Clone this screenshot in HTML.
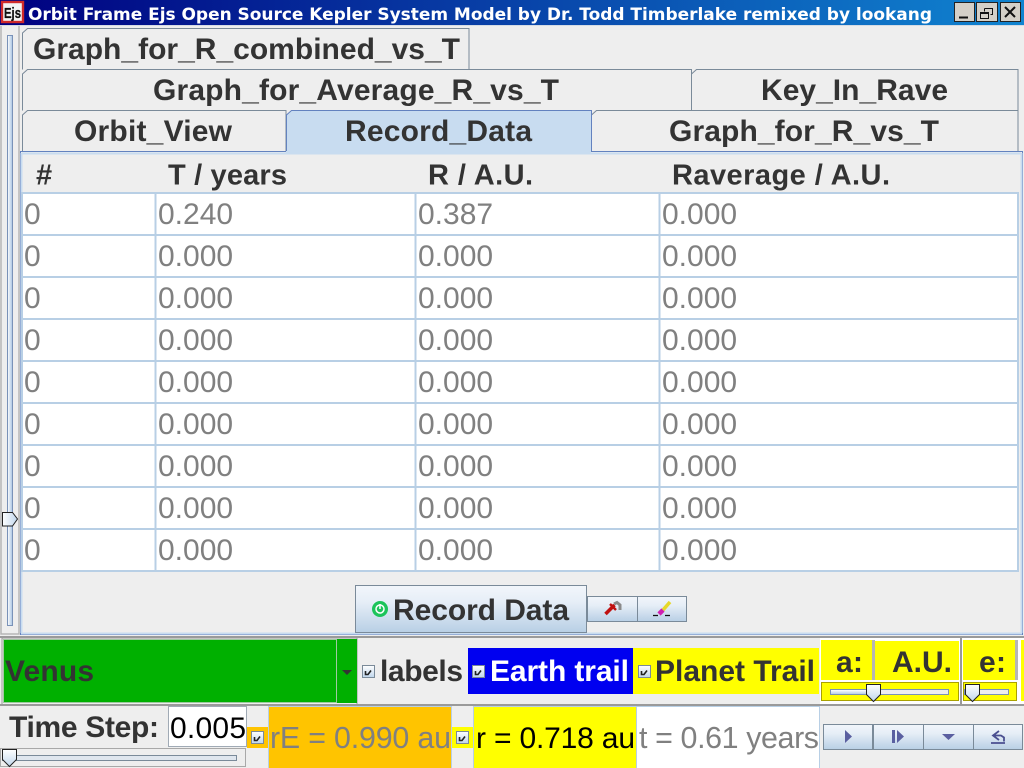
<!DOCTYPE html>
<html><head><meta charset="utf-8"><title>Orbit Frame Ejs Open Source Kepler System Model</title>
<style>
html,body{margin:0;padding:0;width:1024px;height:768px;overflow:hidden;background:#eee}
svg{display:block}
text{font-family:"Liberation Sans",Arial,sans-serif;font-size:30px;white-space:pre}
.b{font-weight:bold;fill:#333}
.h{font-size:29px}
.v{fill:#808080;font-size:30.4px}
.cell{stroke:#b8cfe5;stroke-width:2;fill:none}
</style></head><body>
<svg width="1024" height="768" viewBox="0 0 1024 768" xmlns="http://www.w3.org/2000/svg">
<defs>
<linearGradient id="tb" x1="0" x2="1" y1="0" y2="0"><stop offset="0" stop-color="#000080"/><stop offset="1" stop-color="#1084d0"/></linearGradient>
<linearGradient id="bt" x1="0" x2="0" y1="0" y2="1"><stop offset="0" stop-color="#f2f6fb"/><stop offset=".35" stop-color="#e6eef7"/><stop offset="1" stop-color="#b8cfe5"/></linearGradient>
<linearGradient id="tk" x1="0" x2="0" y1="0" y2="1"><stop offset="0" stop-color="#fff"/><stop offset="1" stop-color="#b8cfe5"/></linearGradient>
<linearGradient id="vt" x1="0" x2="1" y1="0" y2="0"><stop offset="0" stop-color="#fff"/><stop offset="1" stop-color="#a9c4e2"/></linearGradient>
<linearGradient id="th" x1="0" x2="1" y1="0" y2="0"><stop offset="0" stop-color="#fff"/><stop offset="1" stop-color="#c0d6ec"/></linearGradient>
<linearGradient id="thd" x1="0" x2="0" y1="0" y2="1"><stop offset="0" stop-color="#fff"/><stop offset="1" stop-color="#c0d6ec"/></linearGradient>
<g id="cb"><rect x=".5" y=".5" width="12" height="12" fill="url(#thd)" stroke="#7a8a99"/><path d="M3.500 6v3.500h2.500l3-4" fill="none" stroke="#222" stroke-width="1.600"/></g>
<path id="hthumb" d="M.5.5h14v10l-7 7-7-7z" fill="url(#thd)" stroke="#222"/>
</defs>
<rect width="1024" height="768" fill="#eee"/>

<!-- Title bar -->
<rect width="1024" height="25" fill="url(#tb)"/>
<rect y="25" width="1024" height="1" fill="#d4dbe4"/>
<rect x="2" y="2" width="21" height="20" fill="#f4f4f4" stroke="#d02a2a" stroke-width="2.400"/>
<text x="4" y="18" textLength="17" lengthAdjust="spacingAndGlyphs" style="font-size:15px;font-weight:bold;fill:#111;stroke:#111;stroke-width:.3">Ejs</text>
<text x="28" y="20" textLength="904" style="font-family:'DejaVu Sans',sans-serif;font-size:17px;font-weight:bold;fill:#fff">Orbit Frame Ejs Open Source Kepler System Model by Dr. Todd Timberlake remixed by lookang</text>
<g fill="#d4d0c8" stroke="#222">
<rect x="954.500" y="2.500" width="20" height="19"/><rect x="976.500" y="2.500" width="21" height="19"/><rect x="1000.500" y="2.500" width="20" height="19"/></g>
<path d="M959 17.500h9" stroke="#111" stroke-width="2"/>
<path d="M984.500 8.500h8v6h-2M980.500 12.500h8v6h-8z M984.500 8.500v3M980.500 13.500h8" fill="none" stroke="#111"/>
<path d="M1005 7l10 10M1015 7l-10 10" stroke="#111" stroke-width="2"/>

<!-- Left vertical slider -->
<path d="M1 26v608h18V26" fill="none" stroke="#b5b5b5" stroke-width="1.500"/>
<rect x="7.500" y="35.500" width="5" height="590" fill="url(#vt)" stroke="#7a92b8"/>
<path d="M2.500 512.500h10l5 6.500-5 7h-10z" fill="url(#th)" stroke="#222"/>

<!-- Tabs -->
<g fill="#eee" stroke="#7a8a99">
<path d="M22.500 69.500V33l5-4.500h441.500v41"/>
<path d="M22.500 110.500V74l5-4.500h664v41"/>
<path d="M691.500 110.500V74l5-4.500h321.500v41"/>
<path d="M22.500 151.500V115l5-4.500h258.500v41"/>
<path d="M591.500 151.500V115l5-4.500h421.500v41"/>
</g>
<path d="M286.500 153V115l5-4.500h300v42.500z" fill="#c8dcf0" stroke="#6382bf"/>
<text class="b" x="33" y="59" textLength="427">Graph_for_R_combined_vs_T</text>
<text class="b" x="153" y="100" textLength="406">Graph_for_Average_R_vs_T</text>
<text class="b" x="761" y="100" textLength="187">Key_In_Rave</text>
<text class="b" x="74" y="141" textLength="158">Orbit_View</text>
<text class="b" x="345" y="141" textLength="187">Record_Data</text>
<text class="b" x="669" y="141" textLength="270">Graph_for_R_vs_T</text>

<!-- Content panel -->
<rect x="20.500" y="151.500" width="1002" height="483" fill="#eee" stroke="#6382bf"/>
<path d="M22 153.500H1021M21.500 153V633M1021.500 153V633M21 633.500H1022" stroke="#c8dcf0" fill="none" stroke-width="2"/>
<rect x="286" y="151" width="305" height="3" fill="#c8dcf0"/>
<text class="b h" x="36" y="184.500">#</text>
<text class="b h" x="168" y="184.500" textLength="119">T / years</text>
<text class="b h" x="428" y="184.500" textLength="105">R / A.U.</text>
<text class="b h" x="672" y="184.500" textLength="218">Raverage / A.U.</text>

<!-- Table -->
<rect x="23" y="194" width="995" height="377" fill="#fff"/>
<g class="cell">
<rect x="22" y="193" width="996" height="378"/>
<path d="M22 235H1018M22 277H1018M22 319H1018M22 361H1018M22 403H1018M22 445H1018M22 487H1018M22 529H1018M155.500 193V571M415.500 193V571M659.500 193V571"/>
</g>
<g class="v">
<text x="24" y="224">0</text><text x="158" y="224">0.240</text><text x="418" y="224">0.387</text><text x="662" y="224">0.000</text>
<text x="24" y="266">0</text><text x="158" y="266">0.000</text><text x="418" y="266">0.000</text><text x="662" y="266">0.000</text>
<text x="24" y="308">0</text><text x="158" y="308">0.000</text><text x="418" y="308">0.000</text><text x="662" y="308">0.000</text>
<text x="24" y="350">0</text><text x="158" y="350">0.000</text><text x="418" y="350">0.000</text><text x="662" y="350">0.000</text>
<text x="24" y="392">0</text><text x="158" y="392">0.000</text><text x="418" y="392">0.000</text><text x="662" y="392">0.000</text>
<text x="24" y="434">0</text><text x="158" y="434">0.000</text><text x="418" y="434">0.000</text><text x="662" y="434">0.000</text>
<text x="24" y="476">0</text><text x="158" y="476">0.000</text><text x="418" y="476">0.000</text><text x="662" y="476">0.000</text>
<text x="24" y="518">0</text><text x="158" y="518">0.000</text><text x="418" y="518">0.000</text><text x="662" y="518">0.000</text>
<text x="24" y="560">0</text><text x="158" y="560">0.000</text><text x="418" y="560">0.000</text><text x="662" y="560">0.000</text>
</g>

<!-- Record buttons -->
<rect x="355.500" y="585.500" width="231" height="47" fill="url(#bt)" stroke="#7a8a99"/>
<circle cx="380" cy="609" r="8" fill="#1cc45a"/>
<circle cx="380" cy="609" r="4" fill="none" stroke="#fff" stroke-width="1.500"/>
<path d="M380 604v5" stroke="#fff" stroke-width="1.500"/>
<text class="b" x="393" y="620" textLength="176">Record Data</text>
<rect x="587.500" y="596.500" width="50" height="25" fill="url(#bt)" stroke="#7a8a99"/>
<rect x="637.500" y="596.500" width="49" height="25" fill="url(#bt)" stroke="#7a8a99"/>
<path d="M605.500 614l9-9" stroke="#c01010" stroke-width="3.500"/>
<path d="M610 604l6 6" stroke="#c01010" stroke-width="2.500"/>
<path d="M614 604l3-1.500 3 2.500v5" fill="none" stroke="#8a8a8a" stroke-width="3"/>
<path d="M663 610l7-8" stroke="#e6d82a" stroke-width="3.500"/>
<path d="M659 614l4-4" stroke="#d020b0" stroke-width="4.500"/>
<path d="M653 615.500h5M665 615.500h5" stroke="#111" stroke-width="1.200"/>

<!-- Bottom row separator -->
<rect y="636" width="1024" height="2" fill="#9a9a9a"/>

<!-- Combo -->
<rect x="2" y="638" width="355" height="67" fill="#eee" stroke="#9a9a9a"/>
<rect x="3" y="639" width="354" height="64" fill="#00b000"/>
<rect x="3.500" y="639.500" width="333" height="63" fill="none" stroke="#9fc9a0"/>
<text class="b" x="5" y="681" textLength="89">Venus</text>
<path d="M342 670h10l-5 5z" fill="#333"/>

<!-- Checks row -->
<use href="#cb" x="362" y="665"/>
<text class="b" x="380" y="681" textLength="83">labels</text>
<rect x="468" y="648" width="165" height="46" fill="#0000f0"/>
<use href="#cb" x="472" y="665"/>
<text x="490" y="681" textLength="139" style="font-weight:bold;fill:#fff">Earth trail</text>
<rect x="633" y="648" width="186" height="46" fill="#ff0"/>
<use href="#cb" x="638" y="665"/>
<text class="b" x="655" y="681" textLength="160">Planet Trail</text>

<!-- a / e panels -->
<rect x="820" y="638" width="204" height="66" fill="#fff"/>
<rect x="821" y="640" width="51" height="40" fill="#ff0"/>
<rect x="875" y="641" width="84" height="39" fill="#ff0"/>
<rect x="872" y="640" width="3" height="40" fill="#b5b5b5"/>
<text class="b" x="836" y="672" textLength="27">a:</text>
<text class="b" x="892" y="672" textLength="60">A.U.</text>
<rect x="821.500" y="682.500" width="137" height="18" fill="#ff0" stroke="#aaa200"/>
<rect x="830.500" y="689.500" width="118" height="5" fill="#eee" stroke="#7a92b8"/>
<rect x="831" y="690" width="40" height="4" fill="url(#tk)"/>
<use href="#hthumb" x="866" y="684"/>
<rect x="960" y="638" width="2" height="66" fill="#9a9a9a"/>
<rect x="963" y="640" width="52" height="40" fill="#ff0"/>
<rect x="1015" y="640" width="3" height="40" fill="#b5b5b5"/>
<text class="b" x="979" y="672" textLength="27">e:</text>
<rect x="963.500" y="682.500" width="53" height="18" fill="#ff0" stroke="#aaa200"/>
<rect x="964.500" y="689.500" width="44" height="5" fill="#eee" stroke="#7a92b8"/>
<use href="#hthumb" x="965" y="684"/>
<rect x="1021" y="640" width="3" height="61" fill="#ff0"/>

<!-- Second row -->
<rect y="704" width="1024" height="2" fill="#9a9a9a"/>
<text class="b" x="9" y="737" textLength="150">Time Step:</text>
<rect x="168.500" y="706.500" width="78" height="40" fill="#fff" stroke="#a0aab5"/>
<text x="170" y="738" textLength="76" style="fill:#000">0.005</text>
<rect x="0.500" y="748.500" width="245" height="18" fill="#eee" stroke="#a8a8a8"/>
<rect x="2.500" y="755.500" width="234" height="5" fill="#dfe6ee" stroke="#7a8a99"/>
<use href="#hthumb" x="2" y="749"/>

<rect x="247" y="727" width="21" height="21" fill="#ffc400"/>
<use href="#cb" x="251" y="731"/>
<rect x="268.500" y="706.500" width="183" height="62" fill="#ffc400" stroke="#b8cfe5"/>
<text class="v" x="270" y="748" textLength="181">rE = 0.990 au</text>
<rect x="452" y="727" width="21" height="21" fill="#ff0"/>
<use href="#cb" x="456" y="731"/>
<rect x="473.500" y="706.500" width="163" height="62" fill="#ff0" stroke="#b8cfe5"/>
<text x="476" y="748" textLength="159" style="fill:#000">r = 0.718 au</text>
<rect x="636.500" y="706.500" width="183" height="62" fill="#fff" stroke="#b8cfe5"/>
<text class="v" x="639" y="748" textLength="180">t = 0.61 years</text>

<!-- Player buttons -->
<g fill="url(#bt)" stroke="#7a8a99">
<rect x="823.500" y="724.500" width="49" height="25"/>
<rect x="873.500" y="724.500" width="50" height="25"/>
<rect x="923.500" y="724.500" width="50" height="25"/>
<rect x="973.500" y="724.500" width="49" height="25"/>
</g>
<g fill="#5a5fa0">
<path d="M845 730l7 6.500-7 6.500z"/>
<path d="M892 730h3v13h-3zM897 730l7 6.500-7 6.500z"/>
<path d="M942 734h13l-6.500 6z"/>
</g>
<path d="M999 731l-6 4.500 6 4.500M994 735.500h7l3 2v4M991 743h14" fill="none" stroke="#4a4f90" stroke-width="1.800"/>
</svg>
</body></html>
